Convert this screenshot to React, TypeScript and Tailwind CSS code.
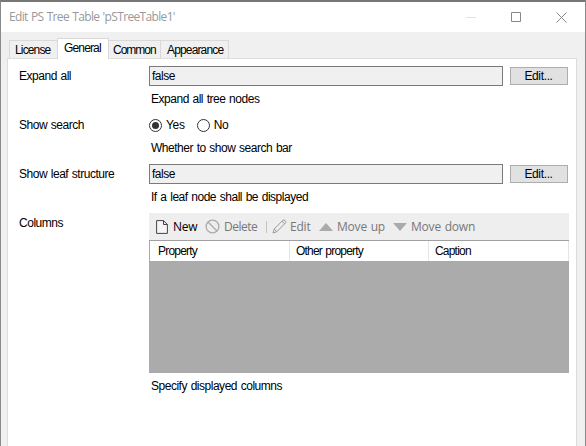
import type { ReactNode } from 'react';

function Row({ label, height, children }: { label: string; height: string; children: ReactNode }) {
  return (
    <div className={`flex shrink-0 ${height}`}>
      <div className="w-[130px] shrink-0 pt-[2px] leading-4">{label}</div>
      <div className="flex flex-col">{children}</div>
    </div>
  );
}

function ValueField({ value }: { value: string }) {
  return (
    <div className="flex items-center gap-[7px]">
      <div className="h-5 w-[354px] border border-[#7a7a7a] bg-[#f0f0f0] pl-0.5 leading-[18px]">{value}</div>
      <button className="h-[18px] w-[58px] border border-[#adadad] bg-[#e1e1e1] pr-px tracking-[-0.35px] leading-4">Edit...</button>
    </div>
  );
}

function Help({ children }: { children: ReactNode }) {
  return <p className="mt-[5px] pl-0.5 leading-4">{children}</p>;
}

function Radio({ label, checked }: { label: string; checked?: boolean }) {
  return (
    <div className="flex items-center gap-1">
      <span className="flex size-[13px] items-center justify-center rounded-full border border-[#333] bg-white">
        {checked && <span className="size-[7px] rounded-full bg-[#333]" />}
      </span>
      <span className="leading-4 tracking-[-0.3px]">{label}</span>
    </div>
  );
}

export default function App() {
  return (
    <div className="flex h-[446px] w-[586px] flex-col overflow-hidden border-x border-t-2 border-x-[#8a8a8a] border-t-[#777] bg-[#f0f0f0] font-['Liberation_Sans',Arial,sans-serif] text-[12px] tracking-[-0.48px] [word-spacing:0.8px] text-black">
      <header className="flex h-[30px] shrink-0 items-center justify-between bg-white pr-[18px] pl-2 font-['Open_Sans',sans-serif] text-[12px] text-[#999]">
        <span className="tracking-[-0.66px]">Edit PS Tree Table 'pSTreeTable1'</span>
        <div className="flex items-center gap-[35px]">
          <svg width="10" height="11" viewBox="0 0 10 11"><path d="M0 5.5H10" stroke="#e3e3e3" /></svg>
          <svg width="10" height="10" viewBox="0 0 10 10" fill="none" stroke="#888"><path d="M.5 .5H9.5V9.5H.5Z" /></svg>
          <svg width="11" height="11" viewBox="0 0 11 11" fill="none" stroke="#888"><path d="M.5 .5L10.5 10.5M10.5 .5L.5 10.5" /></svg>
        </div>
      </header>

      <nav className="flex h-[26px] shrink-0 items-end pl-2 tracking-[-0.85px]">
        <div className="h-[18px] w-[48px] border-t border-l border-[#d9d9d9] pl-[5px] leading-[18px]">License</div>
        <div className="z-10 -mb-px h-[21px] w-[52px] border border-b-0 border-[#d9d9d9] bg-white pl-1.5 leading-[19px]">General</div>
        <div className="h-[18px] w-[51px] border-t border-[#d9d9d9] pl-1 tracking-[-1px] leading-[18px]">Common</div>
        <div className="h-[18px] w-[69px] border-x border-t border-[#d9d9d9] pl-[6px] leading-[18px]">Appearance</div>
      </nav>

      <main className="mr-2 ml-1.5 flex grow flex-col border-x border-t border-[#dcdcdc] bg-white pt-[7px] pl-[11px]">
        <Row label="Expand all" height="h-[49px]">
          <ValueField value="false" />
          <Help>Expand all tree nodes</Help>
        </Row>
        <Row label="Show search" height="h-[49px]">
          <div className="flex h-5 items-center gap-[12px]">
            <Radio label="Yes" checked />
            <Radio label="No" />
          </div>
          <Help>Whether to show search bar</Help>
        </Row>
        <Row label="Show leaf structure" height="h-[49px]">
          <ValueField value="false" />
          <Help>If a leaf node shall be displayed</Help>
        </Row>
        <Row label="Columns" height="h-[190px]">
          <div className="flex h-[27px] w-[420px] items-center bg-[#eee] pl-[7px] font-['Open_Sans',sans-serif] text-[12px] tracking-[-0.2px] whitespace-nowrap text-[#777]">
            <svg width="12" height="14" viewBox="0 0 12 14" fill="#f5f5f5" stroke="#444"><path d="M.6 .6H7.5L11.4 4.5V13.4H.6ZM7.5 .6V4.5H11.4" /></svg>
            <span className="ml-[5px] w-[32px] text-black">New</span>
            <svg width="15" height="15" viewBox="0 0 15 15" fill="none" stroke="#aaa" strokeWidth="1.3"><circle cx="7.5" cy="7.5" r="6.4" /><path d="M3 3L12 12" /></svg>
            <span className="ml-1 w-[42px] tracking-[-0.5px]">Delete</span>
            <span className="h-3 w-px bg-[#c4c4c4]" />
            <svg className="ml-[5px]" width="15" height="15" viewBox="0 0 15 15" fill="none" stroke="#999"><path d="M1 14L2.2 10L11 1.2Q12 .3 13.2 1.6Q14.5 2.8 13.6 3.8L4.8 12.7ZM2.2 10L4.8 12.7M10 2.2L12.7 4.8" /></svg>
            <span className="ml-[3px] w-[29px]">Edit</span>
            <svg width="14" height="8" viewBox="0 0 14 8" fill="#aaa"><path d="M0 8L7 0L14 8Z" /></svg>
            <span className="ml-1 w-[56px]">Move up</span>
            <svg width="14" height="8" viewBox="0 0 14 8" fill="#aaa"><path d="M0 0H14L7 8Z" /></svg>
            <span className="ml-1">Move down</span>
          </div>
          <div className="h-[133px] w-[420px] border-t border-[#a0a0a0] bg-[#ababab]">
            <div className="flex h-5 border-l border-[#ababab] bg-white tracking-[-0.8px] leading-5">
              <div className="w-[140px] border-r border-[#e5e5e5] pl-2">Property</div>
              <div className="w-[139px] border-r border-[#e5e5e5] pl-1.5">Other property</div>
              <div className="grow border-r border-[#e5e5e5] pl-1.5">Caption</div>
            </div>
          </div>
          <Help>Specify displayed columns</Help>
        </Row>
      </main>
    </div>
  );
}
